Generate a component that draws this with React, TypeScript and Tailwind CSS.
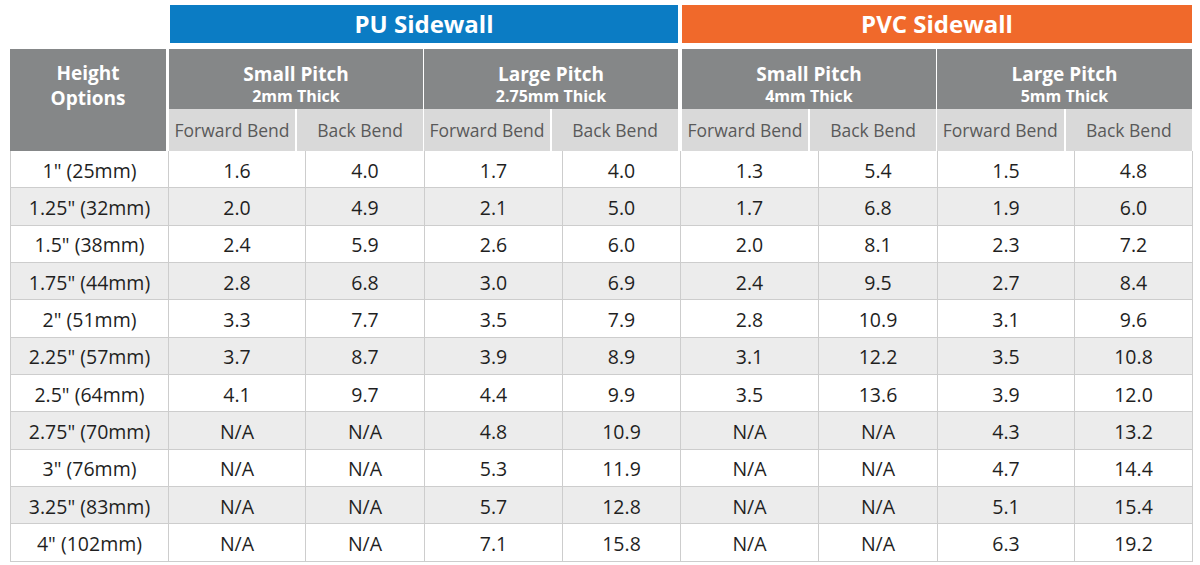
import React from "react";

const rows: string[][] = [
  ['1" (25mm)', "1.6", "4.0", "1.7", "4.0", "1.3", "5.4", "1.5", "4.8"],
  ['1.25" (32mm)', "2.0", "4.9", "2.1", "5.0", "1.7", "6.8", "1.9", "6.0"],
  ['1.5" (38mm)', "2.4", "5.9", "2.6", "6.0", "2.0", "8.1", "2.3", "7.2"],
  ['1.75" (44mm)', "2.8", "6.8", "3.0", "6.9", "2.4", "9.5", "2.7", "8.4"],
  ['2" (51mm)', "3.3", "7.7", "3.5", "7.9", "2.8", "10.9", "3.1", "9.6"],
  ['2.25" (57mm)', "3.7", "8.7", "3.9", "8.9", "3.1", "12.2", "3.5", "10.8"],
  ['2.5" (64mm)', "4.1", "9.7", "4.4", "9.9", "3.5", "13.6", "3.9", "12.0"],
  ['2.75" (70mm)', "N/A", "N/A", "4.8", "10.9", "N/A", "N/A", "4.3", "13.2"],
  ['3" (76mm)', "N/A", "N/A", "5.3", "11.9", "N/A", "N/A", "4.7", "14.4"],
  ['3.25" (83mm)', "N/A", "N/A", "5.7", "12.8", "N/A", "N/A", "5.1", "15.4"],
  ['4" (102mm)', "N/A", "N/A", "7.1", "15.8", "N/A", "N/A", "6.3", "19.2"],
];

const cols = "grid grid-cols-[158px_137px_119px_138px_118px_138px_119px_137px_118px]";

function PitchHeader({ title, sub, extra }: { title: string; sub: string; extra: string }) {
  return (
    <div className={`col-span-2 flex flex-col ${extra}`}>
      <div className="flex h-[60px] flex-col items-center bg-[#858788] pt-[14px] font-bold text-white">
        <div className="text-[19px] leading-[23px]">{title}</div>
        <div className="text-[16px] leading-[20px]">{sub}</div>
      </div>
      <div className="flex h-[42px] bg-[#d9d9d9] text-[17.5px] text-[#595959]">
        <div className="flex flex-1 items-center justify-center border-r-2 border-white">Forward Bend</div>
        <div className="flex flex-1 items-center justify-center">Back Bend</div>
      </div>
    </div>
  );
}

export default function App() {
  return (
    <div
      className="h-[565px] w-[1200px] overflow-hidden bg-white pt-[5px]"
      style={{ fontFamily: '"Open Sans", "Liberation Sans", sans-serif' }}
    >
      <div className="ml-[10px] w-[1182px]">
        <div className={`${cols} h-[38px]`}>
          <div />
          <div className="col-span-4 ml-[2px] mr-[2px] flex items-center justify-center bg-[#0b7cc4] text-[24px] font-bold text-white">
            PU Sidewall
          </div>
          <div className="col-span-4 ml-[2px] flex items-center justify-center bg-[#f0692b] text-[24px] font-bold text-white">
            PVC Sidewall
          </div>
        </div>
        <div className={`${cols} mt-[6px] h-[102px]`}>
          <div className="mr-[2px] flex flex-col items-center bg-[#858788] pt-[12px] text-[19px] font-bold leading-[25px] text-white">
            <div>Height</div>
            <div>Options</div>
          </div>
          <PitchHeader title="Small Pitch" sub="2mm Thick" extra="ml-[1px] mr-[1px]" />
          <PitchHeader title="Large Pitch" sub="2.75mm Thick" extra="mr-[2px]" />
          <PitchHeader title="Small Pitch" sub="4mm Thick" extra="ml-[2px] mr-[1px]" />
          <PitchHeader title="Large Pitch" sub="5mm Thick" extra="" />
        </div>
        <div className="border-l border-[#cdcdcd]">
          {rows.map((r, i) => (
            <div
              key={i}
              className={`${cols} h-[37.35px] ${i % 2 === 1 ? "bg-[#ececec]" : "bg-white"} text-[19.5px] text-[#1f1f1f]`}
            >
              {r.map((c, j) => (
                <div
                  key={j}
                  className="flex items-center justify-center border-b border-r border-[#cdcdcd] pt-[2px]"
                >
                  {c}
                </div>
              ))}
            </div>
          ))}
        </div>
      </div>
    </div>
  );
}
